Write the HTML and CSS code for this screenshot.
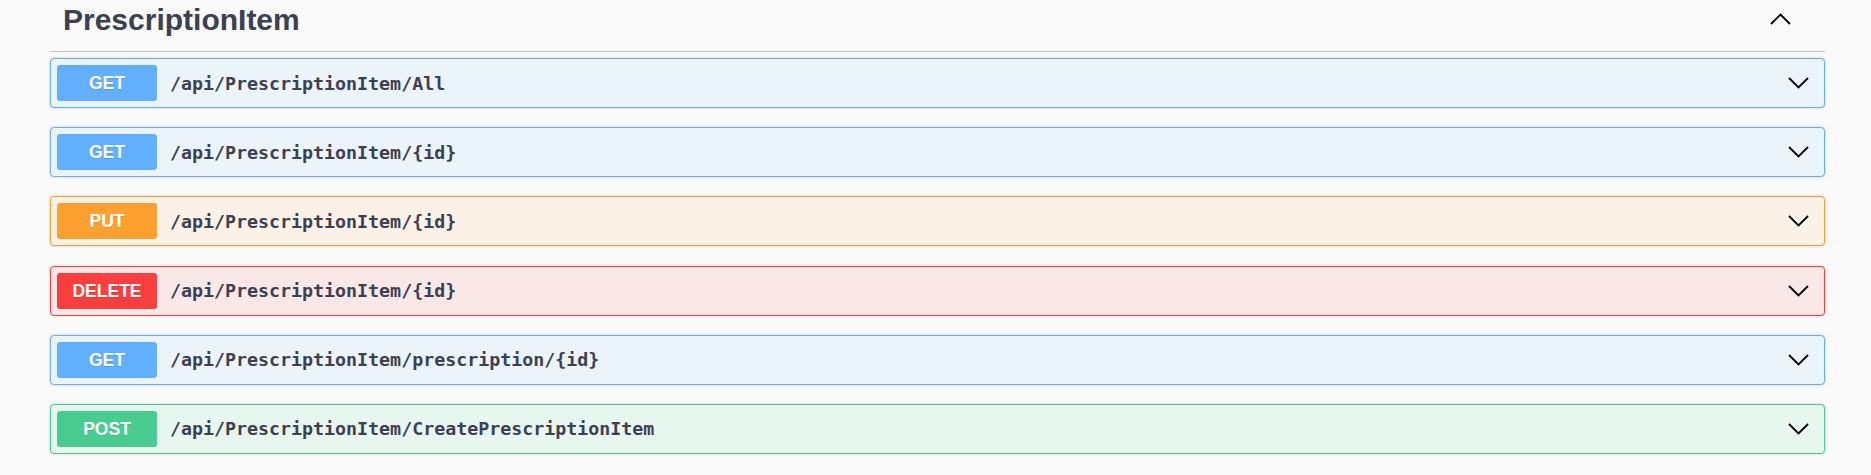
FILE: index.html
```html
<!DOCTYPE html>
<html>
<head>
<meta charset="utf-8">
<link rel="stylesheet" href="styles.css">
</head>
<body>
<div class="tag-section">
  <div class="tag-header">
    <h3 class="tag-title">PrescriptionItem</h3>
    <svg class="tag-arrow" width="21" height="12" viewBox="0 0 21 12"><polyline points="1,11 10.5,1.5 20,11" fill="none" stroke="#000" stroke-width="1.8"/></svg>
  </div>
  <div class="ops">
    <div class="op op-get">
      <span class="method">GET</span>
      <span class="path">/api/PrescriptionItem/All</span>
      <svg class="op-arrow" width="21" height="12" viewBox="0 0 21 12"><polyline points="1,1 10.5,10.5 20,1" fill="none" stroke="#000" stroke-width="1.8"/></svg>
    </div>
    <div class="op op-get">
      <span class="method">GET</span>
      <span class="path">/api/PrescriptionItem/{id}</span>
      <svg class="op-arrow" width="21" height="12" viewBox="0 0 21 12"><polyline points="1,1 10.5,10.5 20,1" fill="none" stroke="#000" stroke-width="1.8"/></svg>
    </div>
    <div class="op op-put">
      <span class="method">PUT</span>
      <span class="path">/api/PrescriptionItem/{id}</span>
      <svg class="op-arrow" width="21" height="12" viewBox="0 0 21 12"><polyline points="1,1 10.5,10.5 20,1" fill="none" stroke="#000" stroke-width="1.8"/></svg>
    </div>
    <div class="op op-delete">
      <span class="method">DELETE</span>
      <span class="path">/api/PrescriptionItem/{id}</span>
      <svg class="op-arrow" width="21" height="12" viewBox="0 0 21 12"><polyline points="1,1 10.5,10.5 20,1" fill="none" stroke="#000" stroke-width="1.8"/></svg>
    </div>
    <div class="op op-get">
      <span class="method">GET</span>
      <span class="path">/api/PrescriptionItem/prescription/{id}</span>
      <svg class="op-arrow" width="21" height="12" viewBox="0 0 21 12"><polyline points="1,1 10.5,10.5 20,1" fill="none" stroke="#000" stroke-width="1.8"/></svg>
    </div>
    <div class="op op-post">
      <span class="method">POST</span>
      <span class="path">/api/PrescriptionItem/CreatePrescriptionItem</span>
      <svg class="op-arrow" width="21" height="12" viewBox="0 0 21 12"><polyline points="1,1 10.5,10.5 20,1" fill="none" stroke="#000" stroke-width="1.8"/></svg>
    </div>
  </div>
</div>
</body>
</html>
```
FILE: styles.css
```css
html, body {
  margin: 0;
  padding: 0;
  background: #fafafa;
}
body {
  font-family: "Liberation Sans", Arial, sans-serif;
  color: #3b4151;
}
.tag-section {
  padding: 0 46px 0 50px;
}
.tag-header {
  display: flex;
  align-items: center;
  justify-content: space-between;
  padding: 5px 34px 17px 13px;
  border-bottom: 1px solid rgba(59, 65, 81, 0.3);
}
.tag-title {
  margin: 0;
  font-size: 30px;
  line-height: 29px;
  font-weight: 700;
  color: #3b4151;
}
.tag-arrow {
  display: block;
  margin-top: -2px;
}
.ops {
  padding-top: 6px;
}
.op {
  display: flex;
  align-items: center;
  height: 48px;
  padding: 0 15px 0 6px;
  margin-bottom: 19.2px;
  border: 1px solid;
  border-radius: 4px;
  box-shadow: 0 0 3px rgba(0, 0, 0, 0.19);
}
.method {
  flex: none;
  width: 100px;
  height: 36px;
  line-height: 36px;
  text-align: center;
  border-radius: 3px;
  color: #fff;
  font-size: 17.5px;
  font-weight: 700;
  text-shadow: 0 1px 0 rgba(0, 0, 0, 0.1);
}
.path {
  flex: 1;
  padding-left: 13px;
  font-family: "DejaVu Sans Mono", monospace;
  font-size: 18.3px;
  font-weight: 600;
  color: #3b4151;
}
.op-arrow {
  display: block;
  flex: none;
}
.op-get { background: #ebf3fb; border-color: #61affe; }
.op-get .method { background: #61affe; }
.op-put { background: #fcf1e6; border-color: #fca130; }
.op-put .method { background: #fca130; }
.op-delete { background: #fae7e7; border-color: #f93e3e; }
.op-delete .method { background: #f93e3e; }
.op-post { background: #e8f6f0; border-color: #49cc90; }
.op-post .method { background: #49cc90; }
```
